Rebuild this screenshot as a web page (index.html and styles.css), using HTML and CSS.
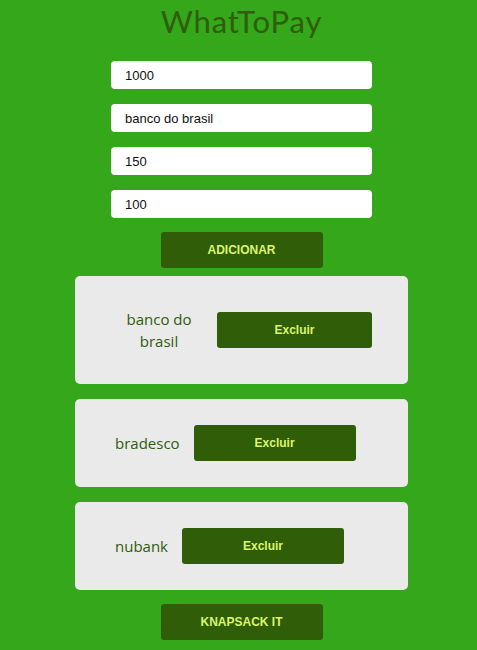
FILE: index.html
```html
<!DOCTYPE html>
<html lang="pt">
<head>
<meta charset="utf-8">
<title>WhatToPay</title>
<link rel="stylesheet" href="styles.css">
</head>
<body>
<main class="app">
  <h1 class="title">WhatToPay</h1>
  <form class="form">
    <input class="field" type="text" value="1000">
    <input class="field" type="text" value="banco do brasil">
    <input class="field" type="text" value="150">
    <input class="field" type="text" value="100">
    <button class="btn btn-main" type="button">ADICIONAR</button>
  </form>
  <section class="list">
    <div class="card">
      <p class="name">banco do brasil</p>
      <button class="btn btn-del" type="button">Excluir</button>
    </div>
    <div class="card">
      <p class="name">bradesco</p>
      <button class="btn btn-del" type="button">Excluir</button>
    </div>
    <div class="card">
      <p class="name">nubank</p>
      <button class="btn btn-del" type="button">Excluir</button>
    </div>
  </section>
  <button class="btn btn-main btn-knap" type="button">KNAPSACK IT</button>
</main>
</body>
</html>
```

FILE: styles.css
```css
* { box-sizing: border-box; }
html, body {
  margin: 0;
  padding: 0;
  background: #34a71a;
}
body {
  font-family: "Liberation Sans", Arial, sans-serif;
}
.app {
  display: flex;
  flex-direction: column;
  align-items: center;
  padding-left: 6px;
}
.title {
  margin: 0;
  height: 45px;
  line-height: 42px;
  font-family: Lato, "Noto Sans", sans-serif;
  font-weight: 400;
  font-size: 31px;
  color: #2f5d0a;
  letter-spacing: 0.9px;
}
.form {
  margin-top: 16px;
  display: flex;
  flex-direction: column;
  align-items: center;
  gap: 15px;
}
.field {
  width: 261px;
  height: 28px;
  border: none;
  border-radius: 4px;
  background: #ffffff;
  padding: 0 14px;
  font-family: "Liberation Sans", Arial, sans-serif;
  font-size: 13px;
  color: #111;
  outline: none;
}
.btn {
  border: none;
  border-radius: 3px;
  background: #2f5d08;
  color: #dcf56b;
  font-family: "Liberation Sans", Arial, sans-serif;
  font-weight: bold;
  font-size: 12px;
  height: 36px;
  cursor: pointer;
}
.btn-main {
  width: 162px;
  margin-top: -1px;
}
.list {
  margin-top: 8px;
  display: flex;
  flex-direction: column;
  gap: 15px;
}
.card {
  width: 333px;
  background: #eaeaea;
  border-radius: 5px;
  padding: 26px 36px;
  display: flex;
  align-items: center;
}
.name {
  margin: 6px 14px 6px 0;
  padding-left: 4px;
  max-width: 92px;
  line-height: 22px;
  font-family: "Open Sans", "Noto Sans", sans-serif;
  font-size: 15px;
  color: #2f5d0a;
  text-align: center;
  flex: 0 0 auto;
}
.btn-del {
  flex: 0 1 162px;
}
.btn-knap {
  margin-top: 14px;
}
```
